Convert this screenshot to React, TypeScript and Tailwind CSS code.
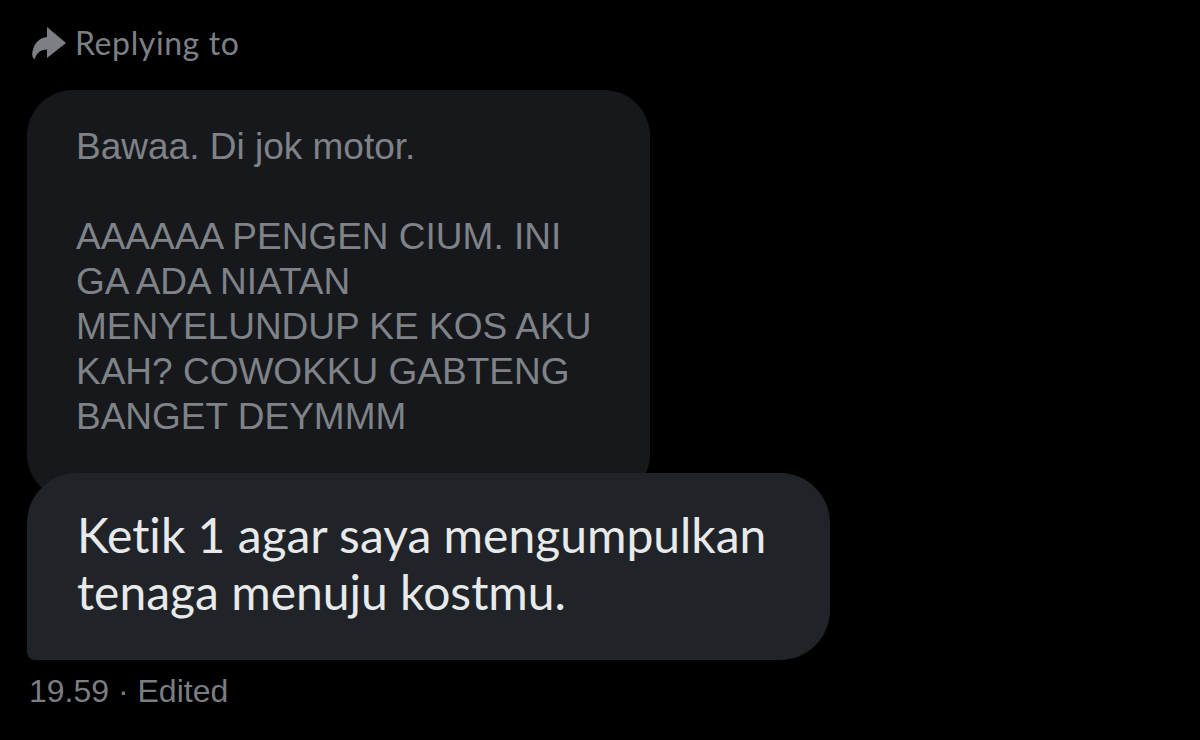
import React from 'react';

function ReplyArrow() {
  return (
    <svg viewBox="0 0 36 36" className="h-[36px] w-[36px]" aria-hidden="true">
      <path
        d="M17 2 L36 18 L17 33 V24.5 C10.5 24.5 6.5 28 4.5 34.5 C2.5 33 1.8 30 2.4 27 C4.2 17.5 10 12.5 17 12 Z"
        fill="#7c8085"
      />
    </svg>
  );
}

const quoted = `Bawaa. Di jok motor.

AAAAAA PENGEN CIUM. INI
GA ADA NIATAN
MENYELUNDUP KE KOS AKU
KAH? COWOKKU GABTENG
BANGET DEYMMM`;

export default function App() {
  return (
    <div className="h-[740px] w-[1200px] overflow-hidden bg-black pl-[27px]">
      <div className="flex items-center gap-[9px] pl-[3px] pt-[24px]">
        <ReplyArrow />
        <span className="font-['Lato',sans-serif] text-[32px] leading-[38px] tracking-[0.6px] text-[#7c8085] [font-variant-ligatures:none]">
          Replying to
        </span>
      </div>

      <div className="mt-[28px] flex flex-col items-start">
        <div className="w-[623px] rounded-[46px] bg-[#16181c] pb-[61px] pl-[49px] pt-[34px]">
          <p className="whitespace-pre-line font-['Liberation_Sans',Arial,sans-serif] text-[37px] leading-[45px] text-[#7f8388]">
            {quoted}
          </p>
        </div>

        <div className="relative z-10 -mt-[27px] w-[803px] rounded-[50px] rounded-bl-[8px] bg-[#202327] pb-[40px] pl-[50px] pt-[33px]">
          <p className="font-['Lato',sans-serif] text-[48px] leading-[57px] text-[#e7e9ea] [font-variant-ligatures:none]">
            Ketik 1 agar saya mengumpulkan
            <br />
            tenaga menuju kostmu.
          </p>
        </div>

        <p className="mt-[11px] pl-[2px] font-['Liberation_Sans',Arial,sans-serif] text-[32px] leading-[40px] text-[#7a7e83]">
          19.59 · Edited
        </p>
      </div>
    </div>
  );
}
